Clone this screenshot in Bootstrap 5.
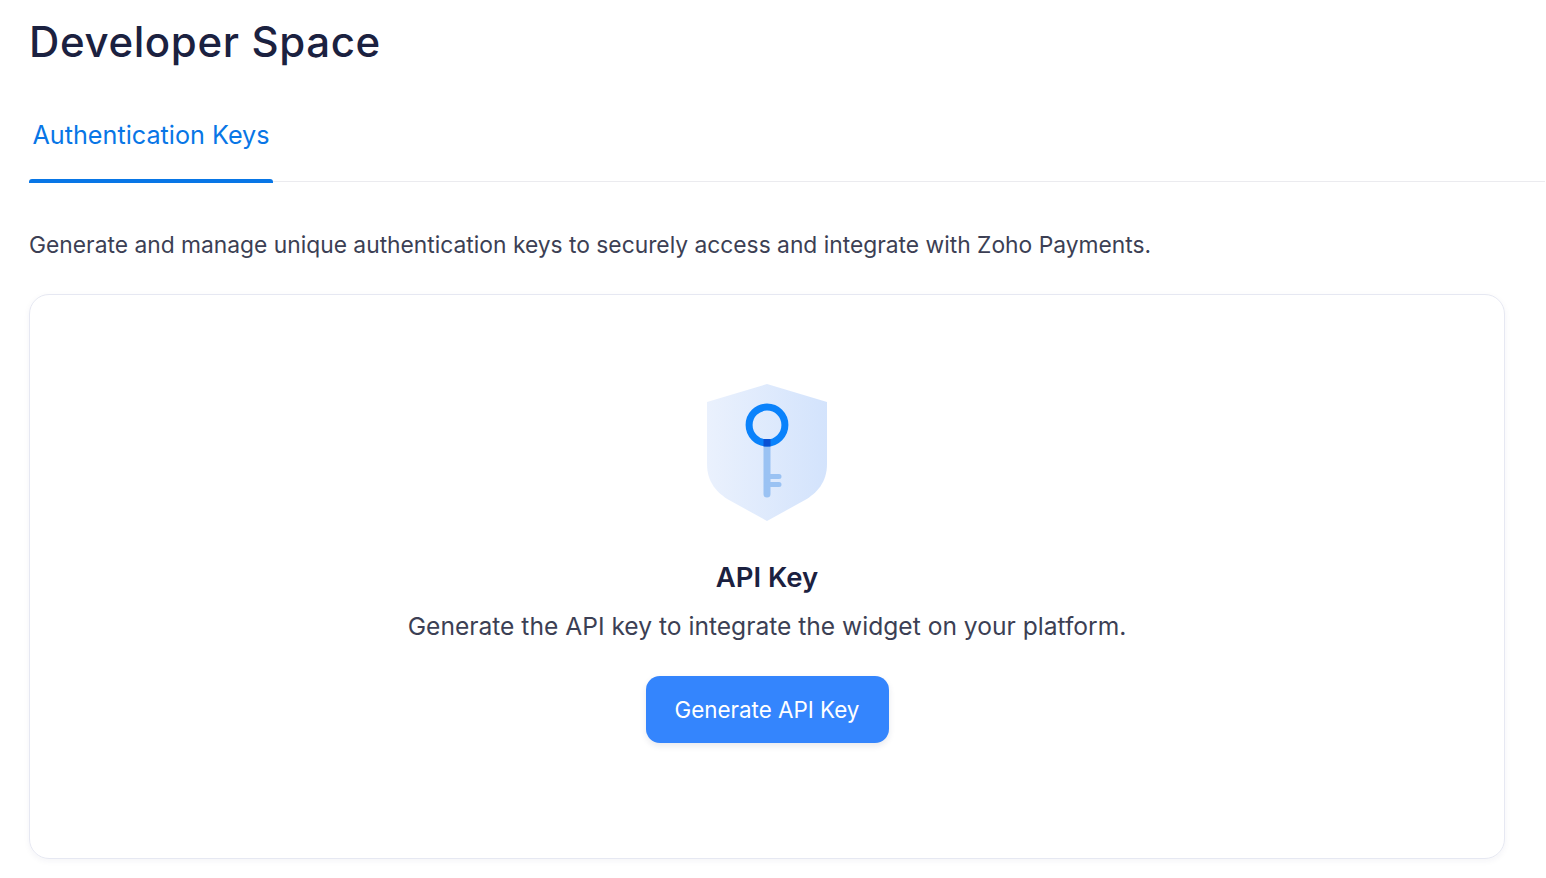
<!DOCTYPE html>
<html lang="en"><head><meta charset="utf-8"><title>Developer Space</title>
<link href="https://cdn.jsdelivr.net/npm/bootstrap@5.3.0/dist/css/bootstrap.min.css" rel="stylesheet">
<style>
html,body{height:100%;overflow:hidden}
body{font-family:Inter,"Liberation Sans",sans-serif;background:#fff;color:#3c3f54}
.page-title{font-size:42px;line-height:52px;font-weight:500;color:#1b2140;margin:0;padding:16px 0 0 29px;letter-spacing:.62px}
.tab-strip{margin:50px 1px 0 29px;height:64px;border-bottom:1px solid #ebebef}
.tab-item{display:block;height:64px;width:244px;text-align:center;font-size:25.200px;line-height:34px;color:#0876e6;text-decoration:none;position:relative}
.tab-item::after{content:"";position:absolute;left:0;right:0;bottom:-1px;height:4px;background:#0876e6;border-radius:3px 3px 0 0}
.intro{font-size:22.800px;line-height:32px;margin:47px 0 33px 29px;color:#3c3f54}
.key-panel{margin:0 41px 0 29px;height:565px;border:1px solid #e6e8f2;border-radius:20px;box-shadow:0 2px 6px rgba(30,40,90,.05);padding-top:89px}
.key-title{font-size:27.500px;line-height:36px;font-weight:600;color:#1b2140;margin:37px 0 0}
.key-text{font-size:24.600px;line-height:34px;margin:14px 0 33px;color:#3c3f54}
.gen-btn{width:243px;height:67px;border-radius:14px;background:#3485fd;border:0;color:#fff;font-size:22.400px;box-shadow:0 3px 6px rgba(30,40,90,.1)}
.gen-btn:hover{background:#3485fd;color:#fff}
</style></head><body>
<h1 class="page-title">Developer Space</h1>
<div class="tab-strip"><a class="tab-item" href="#">Authentication Keys</a></div>
<p class="intro">Generate and manage unique authentication keys to securely access and integrate with Zoho Payments.</p>
<div class="key-panel d-flex flex-column align-items-center text-center">
<svg width="120" height="138" viewBox="0 0 120 138" aria-hidden="true">
<defs><linearGradient id="sg" x1="0" x2="1" y1="0" y2="0"><stop offset="0" stop-color="#eaf1fd"/><stop offset="1" stop-color="#d3e3fc"/></linearGradient></defs>
<path d="M60 0L120 18V80C120 98 110 109 98 116L60 137L22 116C10 109 0 98 0 80V18Z" fill="url(#sg)"/>
<path d="M60 60V110" stroke="#9ac2f3" stroke-width="7" stroke-linecap="round" fill="none"/>
<path d="M60 92.500H72M60 100.500H72" stroke="#9ac2f3" stroke-width="5" stroke-linecap="round" fill="none"/>
<circle cx="60" cy="41" r="17.900" fill="none" stroke="#0a82fb" stroke-width="7"/>
<rect x="56.500" y="55" width="7" height="7.500" fill="#0a50d2"/>
</svg>
<h2 class="key-title">API Key</h2>
<p class="key-text">Generate the API key to integrate the widget on your platform.</p>
<button class="btn gen-btn" type="button">Generate API Key</button>
</div>
<script src="https://cdn.jsdelivr.net/npm/bootstrap@5.3.0/dist/js/bootstrap.bundle.min.js"></script>
</body></html>
